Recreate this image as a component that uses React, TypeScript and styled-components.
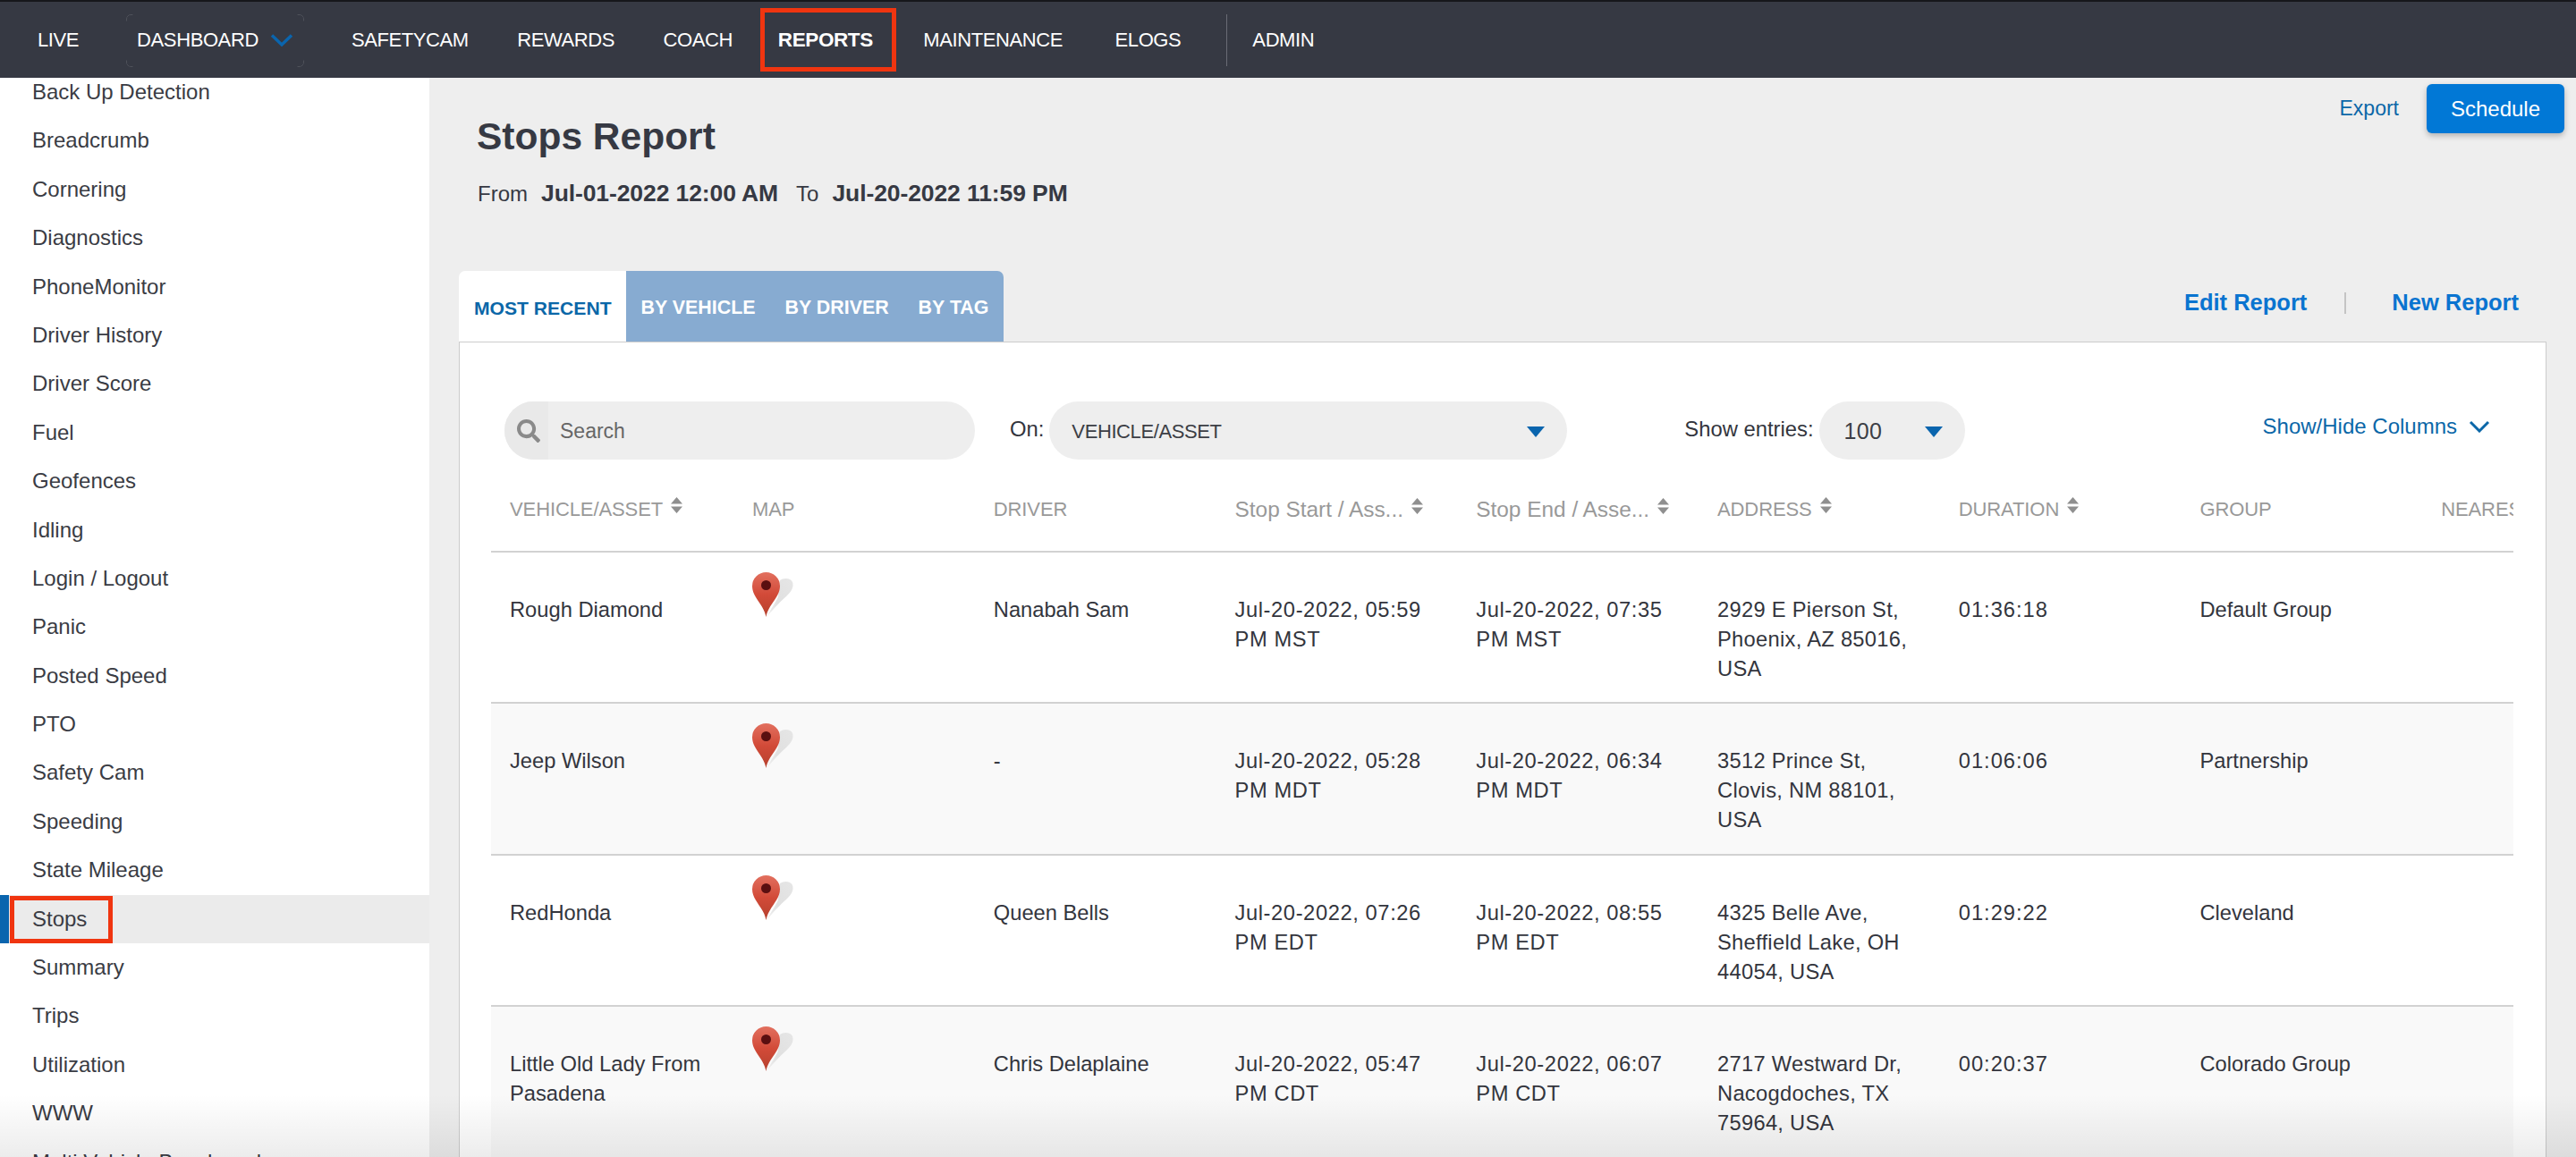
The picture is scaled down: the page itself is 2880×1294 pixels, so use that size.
import React from "react";
import styled, { createGlobalStyle } from "styled-components";
import { FaSearch } from "react-icons/fa";

const GlobalStyle = createGlobalStyle`
  html, body {
    margin: 0;
    height: 100%;
    overflow: hidden;
    background: #eeeeee;
    font-family: "Liberation Sans", Arial, sans-serif;
    color: #33353d;
  }
  *, *::before, *::after { box-sizing: border-box; }
`;

const Page = styled.div`
  position: relative;
  height: 1294px;
  display: flex;
  flex-direction: column;
  overflow: hidden;
`;

const BottomFade = styled.div`
  position: absolute;
  left: 0;
  right: 0;
  bottom: 0;
  height: 70px;
  pointer-events: none;
  background: linear-gradient(to bottom, rgba(0, 0, 0, 0), rgba(0, 0, 0, 0.075));
`;

const Header = styled.header`
  flex: none;
  height: 87px;
  display: flex;
  align-items: center;
  padding-left: 42px;
  background: #363943;
  border-top: 2px solid #16171b;
`;

const NavItem = styled.a<{ $active?: boolean; $gap?: number }>`
  position: relative;
  display: flex;
  align-items: center;
  margin-right: ${(p) => p.$gap ?? 54.5}px;
  font-size: ${(p) => (p.$active ? "22.5px" : "22px")};
  letter-spacing: -0.4px;
  font-weight: ${(p) => (p.$active ? 700 : 400)};
  color: #ffffff;
  white-space: nowrap;
  ${(p) =>
    p.$active &&
    `&::after {
      content: "";
      position: absolute;
      left: -20px;
      right: -26px;
      top: -23px;
      bottom: -22px;
      border: 5px solid #f03510;
    }`}
`;

const DashboardItem = styled(NavItem)`
  &::before {
    content: "";
    position: absolute;
    left: -12px;
    right: -12px;
    top: -16px;
    bottom: -17px;
    border: 1px solid rgba(255, 255, 255, 0.12);
    border-radius: 5px;
    mask:
      radial-gradient(circle at 0 0, #000 7px, transparent 8px),
      radial-gradient(circle at 100% 0, #000 7px, transparent 8px),
      radial-gradient(circle at 0 100%, #000 7px, transparent 8px),
      radial-gradient(circle at 100% 100%, #000 7px, transparent 8px);
  }
`;

const NavChevron = styled.svg`
  width: 26px;
  height: 14px;
  margin-left: 13px;
`;

const NavDivider = styled.span`
  width: 1px;
  height: 58px;
  margin-right: 28px;
  background: #6a6c75;
`;

const Body = styled.div`
  flex: 1;
  min-height: 0;
  display: flex;
`;

const Sidebar = styled.nav`
  flex: none;
  width: 480px;
  overflow: hidden;
  background: #ffffff;
`;

const SideList = styled.ul`
  list-style: none;
  margin: -11px 0 0;
  padding: 0;
`;

const SideItem = styled.li<{ $active?: boolean }>`
  position: relative;
  height: 54.4px;
  line-height: 54px;
  padding-left: 36px;
  font-size: 24px;
  color: #3a3c44;
  background: ${(p) => (p.$active ? "#ebebeb" : "transparent")};
  border-left: ${(p) => (p.$active ? "10px solid #0a65ae" : "none")};
  ${(p) =>
    p.$active &&
    `padding-left: 26px;
    &::after {
      content: "";
      position: absolute;
      left: 1px;
      top: 1px;
      width: 115px;
      height: 53px;
      border: 5px solid #f03510;
    }`}
`;

const Main = styled.main`
  flex: 1;
  min-width: 0;
  padding: 0 33px;
  display: flex;
  flex-direction: column;
`;

const TopSection = styled.section`
  flex: none;
  height: 216px;
  display: flex;
  justify-content: space-between;
  padding: 42px 0 0 20px;
`;

const Title = styled.h1`
  margin: 0;
  font-size: 42.5px;
  line-height: 48px;
  font-weight: 700;
  color: #363943;
`;

const DateLine = styled.p`
  margin: 24px 0 0 1px;
  font-size: 24px;
  line-height: 30px;
  color: #363943;
`;

const DateValue = styled.strong`
  margin: 0 20px 0 15px;
  font-size: 26.5px;
  letter-spacing: -0.1px;
`;

const Actions = styled.div`
  display: flex;
  align-items: flex-start;
  gap: 31px;
  margin: -35px -20px 0 0;
`;

const ExportLink = styled.a`
  font-size: 23px;
  line-height: 55px;
  color: #0b67a8;
`;

const ScheduleButton = styled.button`
  width: 154px;
  height: 55px;
  border: 0;
  border-radius: 6px;
  background: #0178d6;
  color: #ffffff;
  font-family: inherit;
  font-size: 24px;
  box-shadow: 0 3px 6px rgba(0, 0, 0, 0.25);
`;

const TabRow = styled.div`
  flex: none;
  height: 79px;
  display: flex;
  justify-content: space-between;
  align-items: stretch;
`;

const Tabs = styled.div`
  display: flex;
`;

const Tab = styled.a<{ $active?: boolean; $last?: boolean }>`
  display: flex;
  align-items: center;
  padding: 4px 16.5px 0 ${(p) => (p.$active ? "17px" : "16.5px")};
  font-size: ${(p) => (p.$active ? "21.1px" : "21.4px")};
  font-weight: 700;
  white-space: nowrap;
  color: ${(p) => (p.$active ? "#0b67a8" : "#ffffff")};
  background: ${(p) => (p.$active ? "#ffffff" : "#87abd1")};
  border-radius: ${(p) => (p.$active ? "7px 0 0 0" : p.$last ? "0 7px 0 0" : "0")};
`;

const ReportLinks = styled.div`
  display: flex;
  align-items: center;
  padding: 0 31px 8px 0;
`;

const ReportLink = styled.a`
  font-size: 25.5px;
  font-weight: 700;
  color: #0a74d0;
`;

const LinkDivider = styled.span`
  width: 2px;
  height: 24px;
  margin: 0 51px 0 42px;
  background: #c4c4c4;
`;

const Card = styled.section`
  flex: 1;
  min-height: 0;
  padding: 66px 36px 0 35px;
  background: #ffffff;
  border: 1px solid #cccccc;
  border-bottom: 0;
  overflow: hidden;
`;

const Controls = styled.div`
  display: flex;
  align-items: center;
  height: 65px;
  padding-left: 15px;
`;

const SearchBox = styled.div`
  width: 526px;
  height: 65px;
  display: flex;
  align-items: center;
  border-radius: 33px;
  background: #eeeeee;
  overflow: hidden;
`;

const SearchIcon = styled.span`
  flex: none;
  width: 49px;
  height: 100%;
  display: flex;
  align-items: center;
  justify-content: center;
  padding-left: 5px;
  font-size: 26px;
  color: #8a8a8a;
  background: #e9e9e9;
`;

const SearchText = styled.span`
  margin: 2px 0 0 13px;
  font-size: 23px;
  color: #666666;
`;

const FieldLabel = styled.label<{ $left: number }>`
  margin: -4px 6px 0 ${(p) => p.$left}px;
  font-size: 23.8px;
  white-space: nowrap;
  color: #33353d;
`;

const SelectBox = styled.div<{ $width: number; $digits?: boolean }>`
  width: ${(p) => p.$width}px;
  height: 65px;
  display: flex;
  align-items: center;
  justify-content: space-between;
  padding: 2px 25px 0 ${(p) => (p.$digits ? "28px" : "25px")};
  border-radius: 33px;
  background: #eeeeee;
  font-size: ${(p) => (p.$digits ? "25px" : "22px")};
  letter-spacing: ${(p) => (p.$digits ? "0.3px" : "-0.4px")};
  color: #3c3e45;
`;

const Caret = styled.span`
  width: 0;
  height: 0;
  border-left: 10px solid transparent;
  border-right: 10px solid transparent;
  border-top: 12px solid #0a65ae;
`;

const ColumnsToggle = styled.a`
  display: flex;
  align-items: center;
  gap: 13px;
  margin: -10px 0 0 auto;
  padding-right: 26px;
  font-size: 24px;
  color: #0b67a8;
  white-space: nowrap;
`;

const ToggleChevron = styled.svg`
  width: 24px;
  height: 14px;
`;

const TableWrap = styled.div`
  overflow: hidden;
`;

const Table = styled.table`
  width: 2430px;
  table-layout: fixed;
  border-collapse: collapse;
`;

const HeadCell = styled.th<{ $first?: boolean; $mixed?: boolean }>`
  width: ${(p) => (p.$first ? "272px" : "269.7px")};
  height: 103px;
  padding: 9px 0 0 ${(p) => (p.$first ? "21px" : "20px")};
  text-align: left;
  font-size: ${(p) => (p.$mixed ? "24.4px" : "22px")};
  letter-spacing: ${(p) => (p.$mixed ? "0" : "-0.1px")};
  font-weight: 400;
  color: #999999;
  white-space: nowrap;
  border-bottom: 2px solid #d2d2d2;
`;

const SortIcon = styled.svg`
  width: 13px;
  height: 18px;
  margin-left: 9px;
  vertical-align: 3px;
`;

const Row = styled.tr<{ $odd?: boolean }>`
  background: ${(p) => (p.$odd ? "#f9f9f9" : "#ffffff")};
`;

const Cell = styled.td<{ $first?: boolean; $spacing?: number }>`
  height: 169.4px;
  padding: 48px 30px 0 ${(p) => (p.$first ? "21px" : "20px")};
  vertical-align: top;
  font-size: 23.7px;
  letter-spacing: ${(p) => p.$spacing ?? 0}px;
  line-height: 33px;
  color: #33353d;
  border-bottom: 2px solid #d2d2d2;
`;

const MapCell = styled(Cell)`
  padding: 22px 0 0 20px;
`;

const PinIcon = styled.svg`
  display: block;
  width: 46px;
  height: 51px;
`;

const menu = [
  "Back Up Detection", "Breadcrumb", "Cornering", "Diagnostics", "PhoneMonitor", "Driver History",
  "Driver Score", "Fuel", "Geofences", "Idling", "Login / Logout", "Panic", "Posted Speed", "PTO",
  "Safety Cam", "Speeding", "State Mileage", "Stops", "Summary", "Trips", "Utilization", "WWW",
  "Multi Vehicle Benchmark",
];

const columns = [
  { label: "VEHICLE/ASSET", sort: true },
  { label: "MAP" },
  { label: "DRIVER" },
  { label: "Stop Start / Ass...", sort: true, mixed: true },
  { label: "Stop End / Asse...", sort: true, mixed: true },
  { label: "ADDRESS", sort: true },
  { label: "DURATION", sort: true },
  { label: "GROUP" },
  { label: "NEAREST" },
];

const rows = [
  {
    vehicle: "Rough Diamond", driver: "Nanabah Sam",
    start: "Jul-20-2022, 05:59 PM MST", end: "Jul-20-2022, 07:35 PM MST",
    address: "2929 E Pierson St, Phoenix, AZ 85016, USA", duration: "01:36:18", group: "Default Group",
  },
  {
    vehicle: "Jeep Wilson", driver: "-",
    start: "Jul-20-2022, 05:28 PM MDT", end: "Jul-20-2022, 06:34 PM MDT",
    address: "3512 Prince St, Clovis, NM 88101, USA", duration: "01:06:06", group: "Partnership",
  },
  {
    vehicle: "RedHonda", driver: "Queen Bells",
    start: "Jul-20-2022, 07:26 PM EDT", end: "Jul-20-2022, 08:55 PM EDT",
    address: "4325 Belle Ave, Sheffield Lake, OH 44054, USA", duration: "01:29:22", group: "Cleveland",
  },
  {
    vehicle: "Little Old Lady From Pasadena", driver: "Chris Delaplaine",
    start: "Jul-20-2022, 05:47 PM CDT", end: "Jul-20-2022, 06:07 PM CDT",
    address: "2717 Westward Dr, Nacogdoches, TX 75964, USA", duration: "00:20:37", group: "Colorado Group",
  },
];

function Pin() {
  return (
    <PinIcon viewBox="0 0 46 51">
      <defs>
        <linearGradient id="pinRed" x1="0" y1="0" x2="0" y2="1">
          <stop offset="0" stopColor="#e2705f" />
          <stop offset="0.5" stopColor="#d24a38" />
          <stop offset="1" stopColor="#b5412e" />
        </linearGradient>
        <linearGradient id="pinShadow" x1="1" y1="0" x2="0" y2="1">
          <stop offset="0" stopColor="#e6e6e6" />
          <stop offset="0.6" stopColor="#e0e0e0" />
          <stop offset="1" stopColor="#f2f2f2" />
        </linearGradient>
      </defs>
      <path d="M16 50 C20 42 27 33 29 27 L31 9 C35 6 43 6 45 11 C47 17 43 22 38 27 C30 34 22 43 16 50Z" fill="url(#pinShadow)" />
      <path d="M15.5 50 C13 36 0 28 0 15.5 A15.5 15.5 0 0 1 31 15.5 C31 28 18 36 15.5 50Z" fill="url(#pinRed)" />
      <circle cx="15.5" cy="14.5" r="5.5" fill="#5a0f10" />
    </PinIcon>
  );
}

function Sort() {
  return (
    <SortIcon viewBox="0 0 13 18">
      <path d="M6.5 0 L13 7.5 H0Z M0 10.5 H13 L6.5 18Z" fill="#8f8f8f" />
    </SortIcon>
  );
}

export default function App() {
  return (
    <Page>
      <GlobalStyle />
      <Header>
        <NavItem $gap={65}>LIVE</NavItem>
        <DashboardItem $gap={65}>
          DASHBOARD
          <NavChevron viewBox="0 0 26 14">
            <path d="M2 1.5 L13 12 L24 1.5" fill="none" stroke="#0a65ae" strokeWidth="3.4" />
          </NavChevron>
        </DashboardItem>
        <NavItem>SAFETYCAM</NavItem>
        <NavItem>REWARDS</NavItem>
        <NavItem $gap={50.8}>COACH</NavItem>
        <NavItem $active $gap={56.5}>REPORTS</NavItem>
        <NavItem $gap={58.5}>MAINTENANCE</NavItem>
        <NavItem $gap={51}>ELOGS</NavItem>
        <NavDivider />
        <NavItem>ADMIN</NavItem>
      </Header>
      <Body>
        <Sidebar>
          <SideList>
            {menu.map((name) => (
              <SideItem key={name} $active={name === "Stops"}>{name}</SideItem>
            ))}
          </SideList>
        </Sidebar>
        <Main>
          <TopSection>
            <div>
              <Title>Stops Report</Title>
              <DateLine>
                From<DateValue>Jul-01-2022 12:00 AM</DateValue>To<DateValue>Jul-20-2022 11:59 PM</DateValue>
              </DateLine>
            </div>
            <Actions>
              <ExportLink>Export</ExportLink>
              <ScheduleButton>Schedule</ScheduleButton>
            </Actions>
          </TopSection>
          <TabRow>
            <Tabs>
              <Tab $active>MOST RECENT</Tab>
              <Tab>BY VEHICLE</Tab>
              <Tab>BY DRIVER</Tab>
              <Tab $last>BY TAG</Tab>
            </Tabs>
            <ReportLinks>
              <ReportLink>Edit Report</ReportLink>
              <LinkDivider />
              <ReportLink>New Report</ReportLink>
            </ReportLinks>
          </TabRow>
          <Card>
            <Controls>
              <SearchBox>
                <SearchIcon><FaSearch /></SearchIcon>
                <SearchText>Search</SearchText>
              </SearchBox>
              <FieldLabel $left={39}>On:</FieldLabel>
              <SelectBox $width={579}>VEHICLE/ASSET<Caret /></SelectBox>
              <FieldLabel $left={131}>Show entries:</FieldLabel>
              <SelectBox $width={163} $digits>100<Caret /></SelectBox>
              <ColumnsToggle>
                Show/Hide Columns
                <ToggleChevron viewBox="0 0 24 14">
                  <path d="M2 2 L12 12 L22 2" fill="none" stroke="#0b67a8" strokeWidth="3" />
                </ToggleChevron>
              </ColumnsToggle>
            </Controls>
            <TableWrap>
              <Table>
                <thead>
                  <tr>
                    {columns.map((col, i) => (
                      <HeadCell key={col.label} $first={i === 0} $mixed={col.mixed}>
                        {col.label}
                        {col.sort && <Sort />}
                      </HeadCell>
                    ))}
                  </tr>
                </thead>
                <tbody>
                  {rows.map((row, i) => (
                    <Row key={row.vehicle} $odd={i % 2 === 1}>
                      <Cell $first>{row.vehicle}</Cell>
                      <MapCell><Pin /></MapCell>
                      <Cell>{row.driver}</Cell>
                      <Cell $spacing={0.6}>{row.start}</Cell>
                      <Cell $spacing={0.6}>{row.end}</Cell>
                      <Cell $spacing={0.3}>{row.address}</Cell>
                      <Cell $spacing={1}>{row.duration}</Cell>
                      <Cell>{row.group}</Cell>
                      <Cell />
                    </Row>
                  ))}
                </tbody>
              </Table>
            </TableWrap>
          </Card>
        </Main>
      </Body>
      <BottomFade />
    </Page>
  );
}
